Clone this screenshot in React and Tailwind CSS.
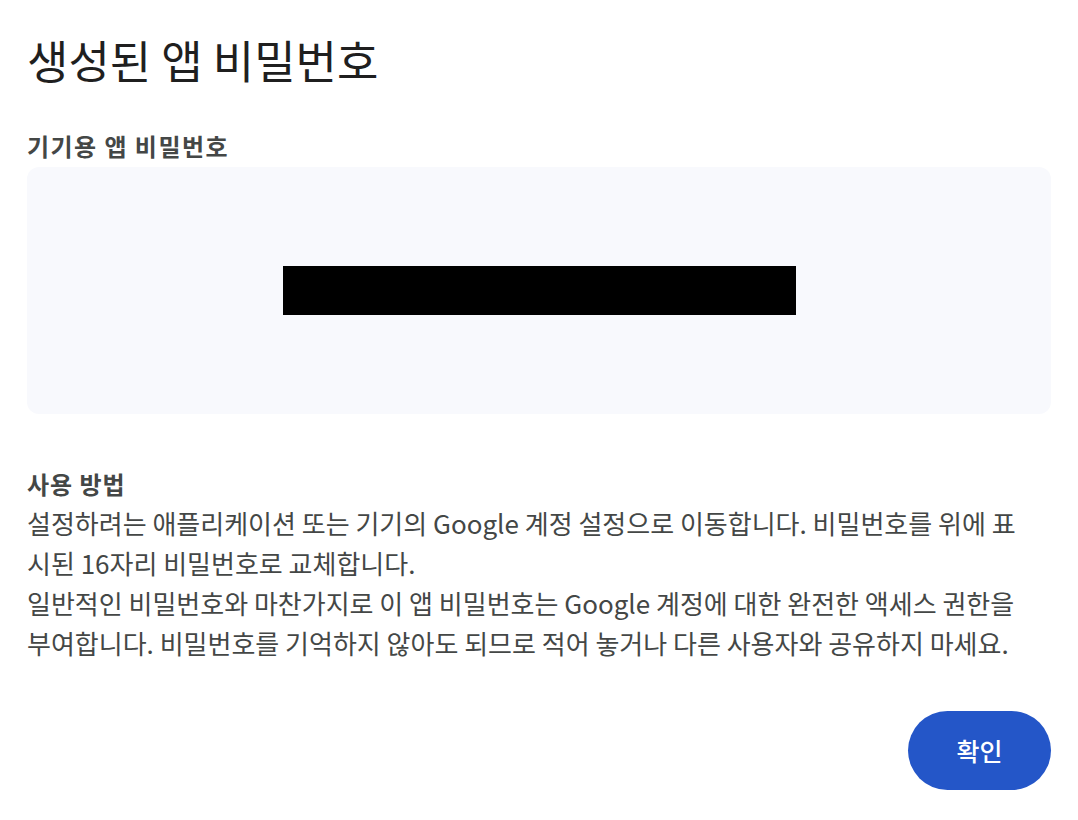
import React from 'react';

const font = { fontFamily: '"Noto Sans CJK KR", "Noto Sans", sans-serif' };

export default function App() {
  return (
    <div className="min-h-screen bg-white px-[27px] pt-[28px] pb-[30px]" style={font}>
      {/* Title */}
      <h1 className="text-[45px] leading-[64px] font-normal text-[#1f1f1f]">생성된 앱 비밀번호</h1>

      {/* Password block */}
      <h2 className="mt-[38px] text-[24px] leading-[32px] font-bold tracking-[0.06em] text-[#444746]">기기용 앱 비밀번호</h2>
      <div className="mt-[5px] h-[247px] rounded-xl bg-[#f8f9fd] flex items-center justify-center">
        <div className="w-[513px] h-[49px] bg-black" />
      </div>

      {/* How to use */}
      <div className="mt-[52px] text-[#444746]">
        <h3 className="text-[24px] leading-[36px] font-bold tracking-[0.04em]">사용 방법</h3>
        <p className="mt-[1px] text-[26px] leading-[40px] whitespace-nowrap">
          설정하려는 애플리케이션 또는 기기의 Google 계정 설정으로 이동합니다. 비밀번호를 위에 표<br />
          시된 16자리 비밀번호로 교체합니다.
        </p>
        <p className="text-[26px] leading-[40px] whitespace-nowrap">
          일반적인 비밀번호와 마찬가지로 이 앱 비밀번호는 Google 계정에 대한 완전한 액세스 권한을<br />
          부여합니다. 비밀번호를 기억하지 않아도 되므로 적어 놓거나 다른 사용자와 공유하지 마세요.
        </p>
      </div>

      {/* Actions */}
      <div className="mt-[48px] flex justify-end">
        <button className="w-[143px] h-[79px] rounded-full bg-[#2456c8] text-white text-[25px] font-medium">
          확인
        </button>
      </div>
    </div>
  );
}
